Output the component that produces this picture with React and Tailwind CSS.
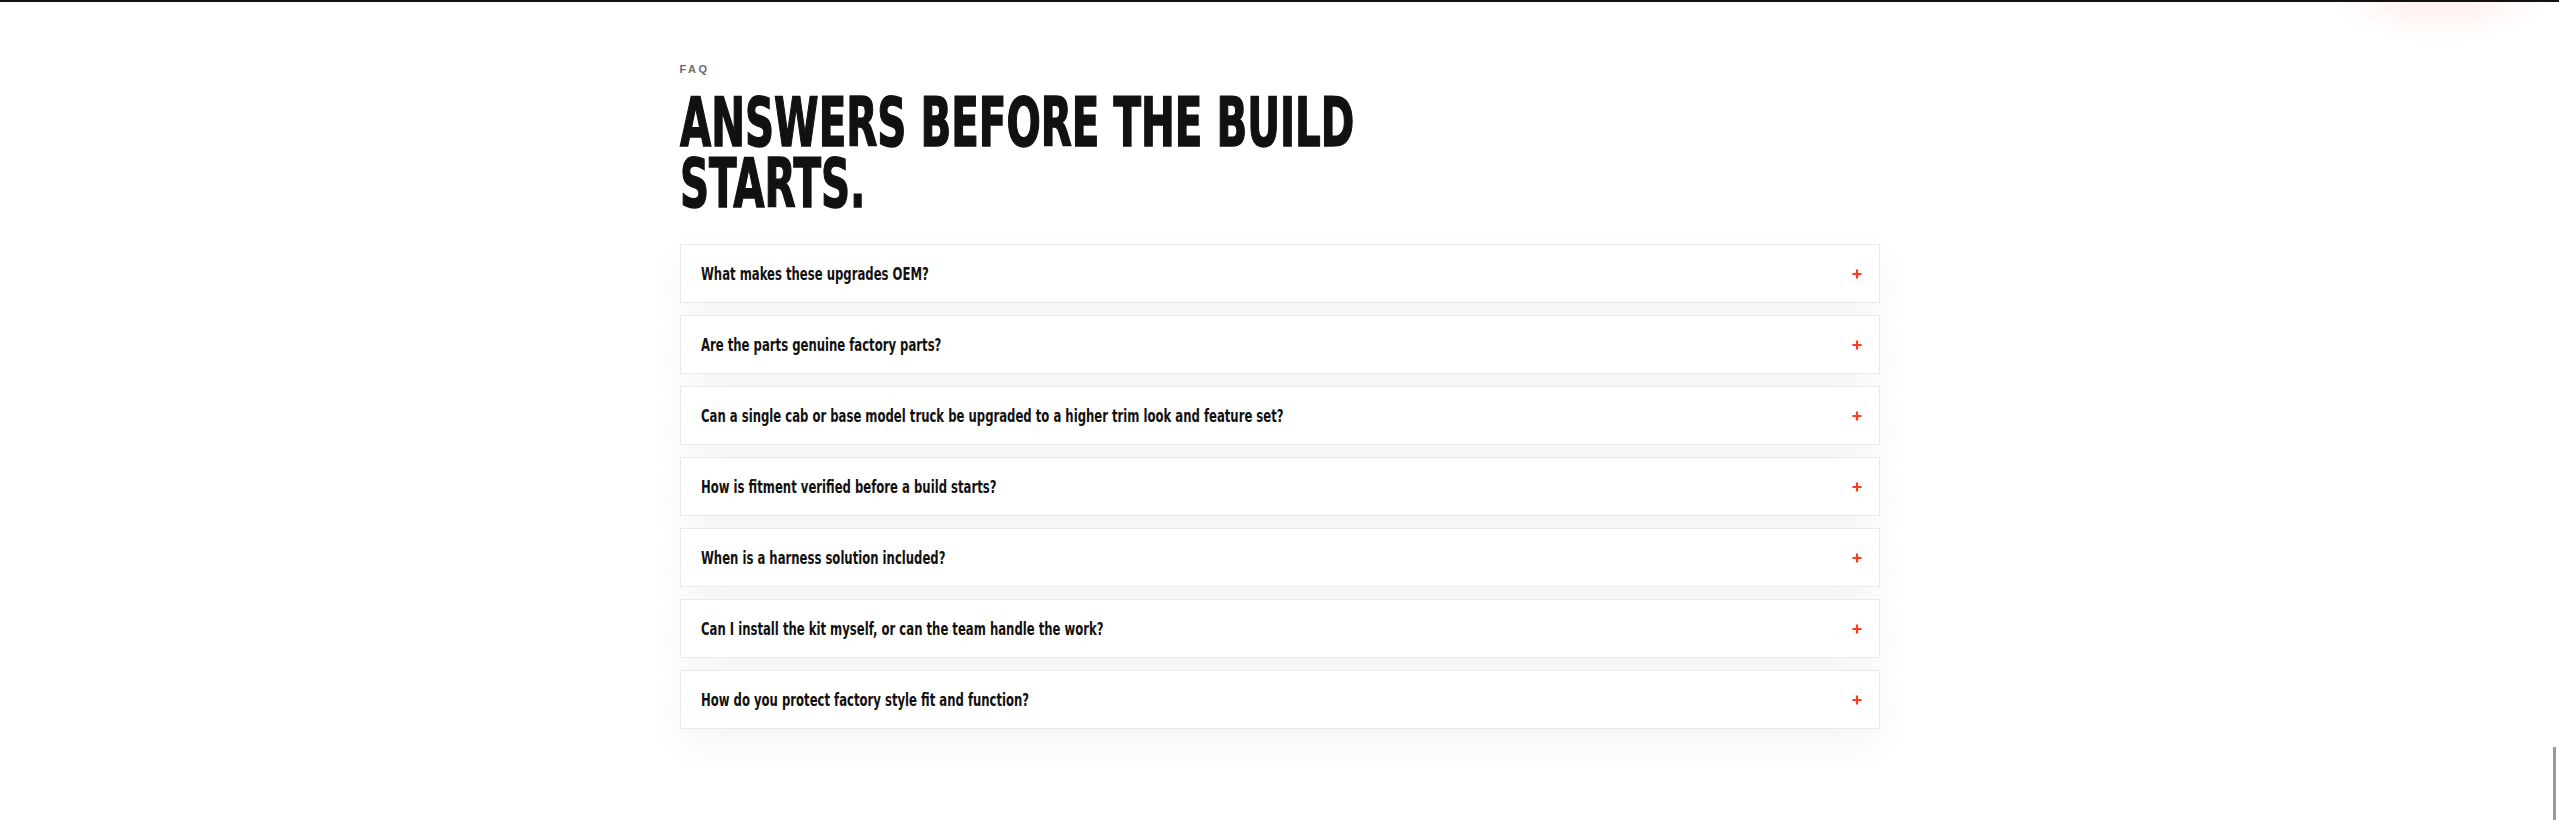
import React from "react";

const questions = [
  "What makes these upgrades OEM?",
  "Are the parts genuine factory parts?",
  "Can a single cab or base model truck be upgraded to a higher trim look and feature set?",
  "How is fitment verified before a build starts?",
  "When is a harness solution included?",
  "Can I install the kit myself, or can the team handle the work?",
  "How do you protect factory style fit and function?",
];

const condensed = "font-['DejaVu_Sans_Condensed','Liberation_Sans',sans-serif]";

function Plus() {
  return (
    <svg width="10" height="10" viewBox="0 0 10 10" className="shrink-0">
      <path d="M5 0.5v9M0.5 5h9" stroke="#ff3b1c" strokeWidth="2.2" />
    </svg>
  );
}

export default function App() {
  return (
    <div className="relative min-h-screen overflow-hidden bg-white border-t-2 border-[#111]">
      {/* red glow top right */}
      <div className="absolute -top-[45px] right-[4px] h-[85px] w-[230px] rounded-full bg-[radial-gradient(ellipse_at_center,rgba(255,70,50,0.09),rgba(255,70,50,0)_70%)]" />

      <section className="mx-auto w-[1200px] pt-[59px] pb-[80px]">
        <p className="text-[11px] leading-[16px] font-bold tracking-[0.22em] text-[#6b6b6b] font-['Liberation_Sans',sans-serif]">
          FAQ
        </p>

        <h2 className={`mt-[15px] text-[68px] leading-[61px] font-bold text-[#111] uppercase ${condensed} origin-left scale-x-[0.66] inline-block whitespace-nowrap [-webkit-text-stroke:1.5px_#111]`}>
          Answers before the build
          <br />
          starts.
        </h2>

        <div className="mt-[30px] flex flex-col gap-[12px]">
          {questions.map((q) => (
            <button
              key={q}
              className="flex h-[59px] w-full items-center justify-between border border-[#e9e9e9] bg-white pl-[20px] pr-[17px] text-left shadow-[0_14px_40px_rgba(0,0,0,0.045)]"
            >
              <span className={`inline-block origin-left scale-x-[0.72] whitespace-nowrap text-[18px] leading-[24px] font-bold text-[#111] ${condensed}`}>
                {q}
              </span>
              <Plus />
            </button>
          ))}
        </div>
      </section>

      {/* scroll indicator */}
      <div className="fixed right-[3px] top-[747px] h-[73px] w-[3px] bg-[#9a9a9a]" />
    </div>
  );
}
